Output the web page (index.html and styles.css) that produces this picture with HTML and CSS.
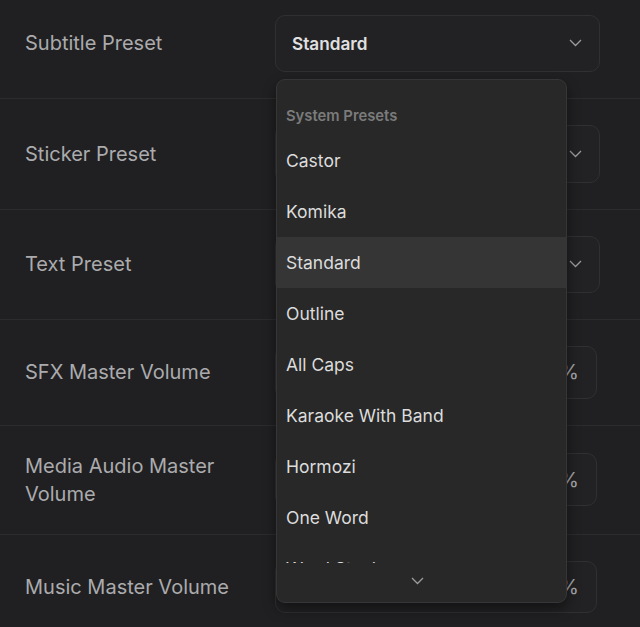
FILE: index.html
```html
<!DOCTYPE html>
<html>
<head>
<meta charset="utf-8">
<link rel="stylesheet" href="styles.css">
</head>
<body>
<div class="page">
  <div class="settings">
    <div class="row">
      <div class="label">Subtitle Preset</div>
      <div class="control select"><span class="value">Standard</span><svg class="chev" width="13" height="8" viewBox="0 0 13 8"><polyline points="1,1 6.5,6.5 12,1"/></svg></div>
    </div>
    <div class="row">
      <div class="label">Sticker Preset</div>
      <div class="control select"><span class="value">Standard</span><svg class="chev" width="13" height="8" viewBox="0 0 13 8"><polyline points="1,1 6.5,6.5 12,1"/></svg></div>
    </div>
    <div class="row">
      <div class="label">Text Preset</div>
      <div class="control select"><span class="value">Standard</span><svg class="chev" width="13" height="8" viewBox="0 0 13 8"><polyline points="1,1 6.5,6.5 12,1"/></svg></div>
    </div>
    <div class="row">
      <div class="label">SFX Master Volume</div>
      <div class="control num"><span class="value">100</span><span class="pct">%</span></div>
    </div>
    <div class="row">
      <div class="label">Media Audio Master Volume</div>
      <div class="control num"><span class="value">100</span><span class="pct">%</span></div>
    </div>
    <div class="row last">
      <div class="label">Music Master Volume</div>
      <div class="control num"><span class="value">100</span><span class="pct">%</span></div>
    </div>
  </div>

  <div class="menu">
    <div class="menu-list">
      <div class="group">System Presets</div>
      <div class="item">Castor</div>
      <div class="item">Komika</div>
      <div class="item active">Standard</div>
      <div class="item">Outline</div>
      <div class="item">All Caps</div>
      <div class="item">Karaoke With Band</div>
      <div class="item">Hormozi</div>
      <div class="item">One Word</div>
      <div class="item">Word Stack</div>
    </div>
    <div class="scroll-down"><svg class="chev" width="13" height="8" viewBox="0 0 13 8"><polyline points="1,1 6.5,6.5 12,1"/></svg></div>
  </div>
</div>
</body>
</html>
```

FILE: styles.css
```css
html, body {
  margin: 0;
  padding: 0;
  background: #202022;
  height: 100%;
  overflow: hidden;
}
body {
  font-family: Inter, "Noto Sans", sans-serif;
}
.page {
  position: relative;
  width: 640px;
  height: 627px;
  overflow: hidden;
}
.settings {
  margin-top: -11.5px;
}
.row {
  display: flex;
  align-items: center;
  padding: 26px 0;
  border-bottom: 1px solid #2c2c2e;
}
.label {
  width: 250px;
  padding-left: 25px;
  padding-right: 20px;
  box-sizing: border-box;
  flex: none;
  color: #ababad;
  font-size: 20px;
  line-height: 28px;
}
.control {
  box-sizing: border-box;
  margin-left: 25px;
  border: 1px solid #303032;
  border-radius: 10px;
  background: #222224;
  display: flex;
  align-items: center;
  justify-content: space-between;
}
.select {
  width: 325px;
  height: 57.5px;
  padding: 0 17px 0 16px;
}
.select .value {
  color: #e0e0e0;
  font-size: 17.2px;
  font-weight: 600;
}
.num {
  width: 322px;
  height: 52.5px;
  padding: 0 17px 0 16px;
}
.num .value, .num .pct {
  color: #a8a8aa;
  font-size: 20px;
}
.chev {
  display: block;
  fill: none;
  stroke: #9c9c9e;
  stroke-width: 1.3;
}
.menu {
  position: absolute;
  left: 276px;
  top: 79px;
  width: 291px;
  height: 524px;
  box-sizing: border-box;
  background: #282828;
  border: 1px solid #363638;
  border-radius: 9px;
  box-shadow: 0 6px 14px rgba(0,0,0,0.45);
  overflow: hidden;
}
.menu-list {
  height: 482.5px;
  overflow: hidden;
}
.group {
  height: 55px;
  padding: 16px 0 0 9px;
  box-sizing: border-box;
  display: flex;
  align-items: center;
  color: #7b7b7b;
  font-size: 14.8px;
  font-weight: 600;
}
.item {
  height: 51px;
  display: flex;
  align-items: center;
  padding-left: 9px;
  color: #dcdcdc;
  font-size: 17.5px;
}
.item.active {
  background: #353535;
}
.scroll-down {
  height: 36px;
  display: flex;
  justify-content: center;
  align-items: center;
  padding-right: 8px;
}
```
